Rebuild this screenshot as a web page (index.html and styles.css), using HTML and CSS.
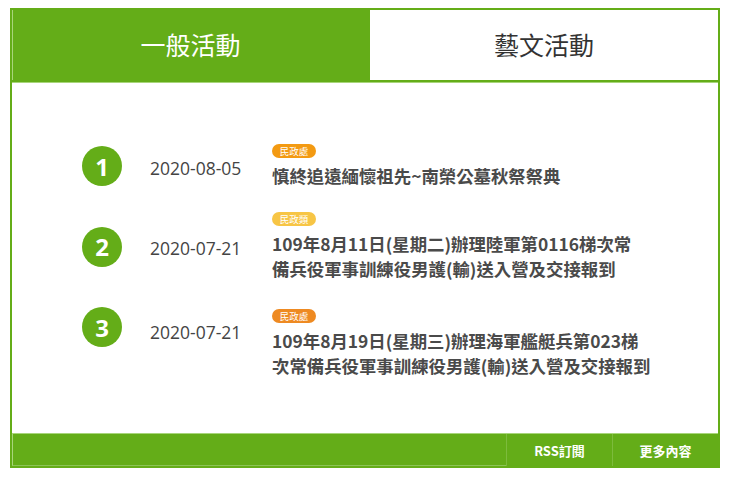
FILE: index.html
```html
<!DOCTYPE html>
<html lang="zh-Hant">
<head>
<meta charset="utf-8">
<link rel="stylesheet" href="styles.css">
</head>
<body>
<div class="box">
  <div class="tabs">
    <div class="tab active">一般活動</div>
    <div class="tab">藝文活動</div>
  </div>
  <div class="content">
    <div class="item">
      <div class="num">1</div>
      <div class="date">2020-08-05</div>
      <div class="info">
        <span class="badge orange">民政處</span>
        <div class="title">慎終追遠緬懷祖先~南榮公墓秋祭祭典</div>
      </div>
    </div>
    <div class="item">
      <div class="num">2</div>
      <div class="date">2020-07-21</div>
      <div class="info">
        <span class="badge yellow">民政類</span>
        <div class="title">109年8月11日(星期二)辦理陸軍第0116梯次常<br>備兵役軍事訓練役男護(輸)送入營及交接報到</div>
      </div>
    </div>
    <div class="item item-top">
      <div class="num">3</div>
      <div class="date">2020-07-21</div>
      <div class="info">
        <span class="badge orange2">民政處</span>
        <div class="title">109年8月19日(星期三)辦理海軍艦艇兵第023梯<br>次常備兵役軍事訓練役男護(輸)送入營及交接報到</div>
      </div>
    </div>
  </div>
  <div class="footer">
    <div class="fill"></div>
    <a class="fbtn">RSS訂閱</a>
    <a class="fbtn">更多內容</a>
  </div>
</div>
</body>
</html>
```

FILE: styles.css
```css
* { box-sizing: border-box; }
body {
  margin: 0;
  background: #fff;
  font-family: "Noto Sans", "Noto Sans CJK TC", sans-serif;
}
.box {
  margin: 8px 0 0 10px;
  width: 710px;
  height: 460px;
  border: 2px solid #64ad18;
  display: flex;
  flex-direction: column;
}
.tabs {
  display: flex;
  height: 72px;
  border-bottom: 2px solid #64ad18;
  box-shadow: 0 1px 0 #a8d57a;
}
.tab {
  flex: 1;
  display: flex;
  align-items: center;
  justify-content: center;
  font-family: "Noto Sans CJK TC", sans-serif;
  font-size: 25px;
  color: #333;
  background: #fff;
  border-left: 2px solid #64ad18;
  padding-bottom: 2px;
}
.tab.active {
  flex: 0 0 356px;
  background: #64ad18;
  color: #fff;
  border-left: 1px solid #a8d57a;
}
.content {
  flex: 1;
  padding: 62px 0 0 70px;
  display: flex;
  flex-direction: column;
  gap: 24px;
}
.item {
  display: flex;
  align-items: center;
}
.item + .item + .item { margin-top: 4px; }
.num {
  width: 40px;
  height: 40px;
  border-radius: 50%;
  background: #64ad18;
  color: #fff;
  font-family: "Open Sans", sans-serif;
  font-weight: 700;
  font-size: 24px;
  display: flex;
  align-items: center;
  justify-content: center;
  flex: none;
}
.date {
  margin-left: 28px;
  width: 122px;
  font-family: "Open Sans", sans-serif;
  font-size: 17.5px;
  line-height: 24px;
  color: #444;
  padding-top: 3px;
  flex: none;
}
.item-top { align-items: flex-start; }
.item-top .num { margin-top: -2px; }
.item-top .date { margin-top: 8px; }
.info {
  display: flex;
  flex-direction: column;
  align-items: flex-start;
}
.badge {
  display: inline-block;
  width: 44px;
  height: 14px;
  border-radius: 7px;
  color: #fff;
  font-family: "Noto Sans CJK TC", sans-serif;
  font-size: 9.5px;
  line-height: 14px;
  text-align: center;
  margin-bottom: 5px;
}
.orange { background: #f39a12; }
.yellow { background: #f7c545; }
.orange2 { background: #ee8a22; }
.title {
  font-family: "Noto Sans CJK TC", sans-serif;
  font-weight: 700;
  font-size: 17.4px;
  line-height: 25px;
  color: #4a4a4a;
  white-space: nowrap;
}
.footer {
  height: 33px;
  display: flex;
  background: #64ad18;
  border-top: 1px solid #a8d57a;
}
.fill {
  flex: 1;
  border-left: 1px solid #a8d57a;
  border-bottom: 1px solid #8cc456;
}
.fbtn {
  width: 106px;
  display: flex;
  align-items: center;
  justify-content: center;
  color: #fff;
  font-family: "Noto Sans CJK TC", sans-serif;
  font-weight: 700;
  font-size: 13px;
  border-left: 1px solid #7dbb3c;
}
```
